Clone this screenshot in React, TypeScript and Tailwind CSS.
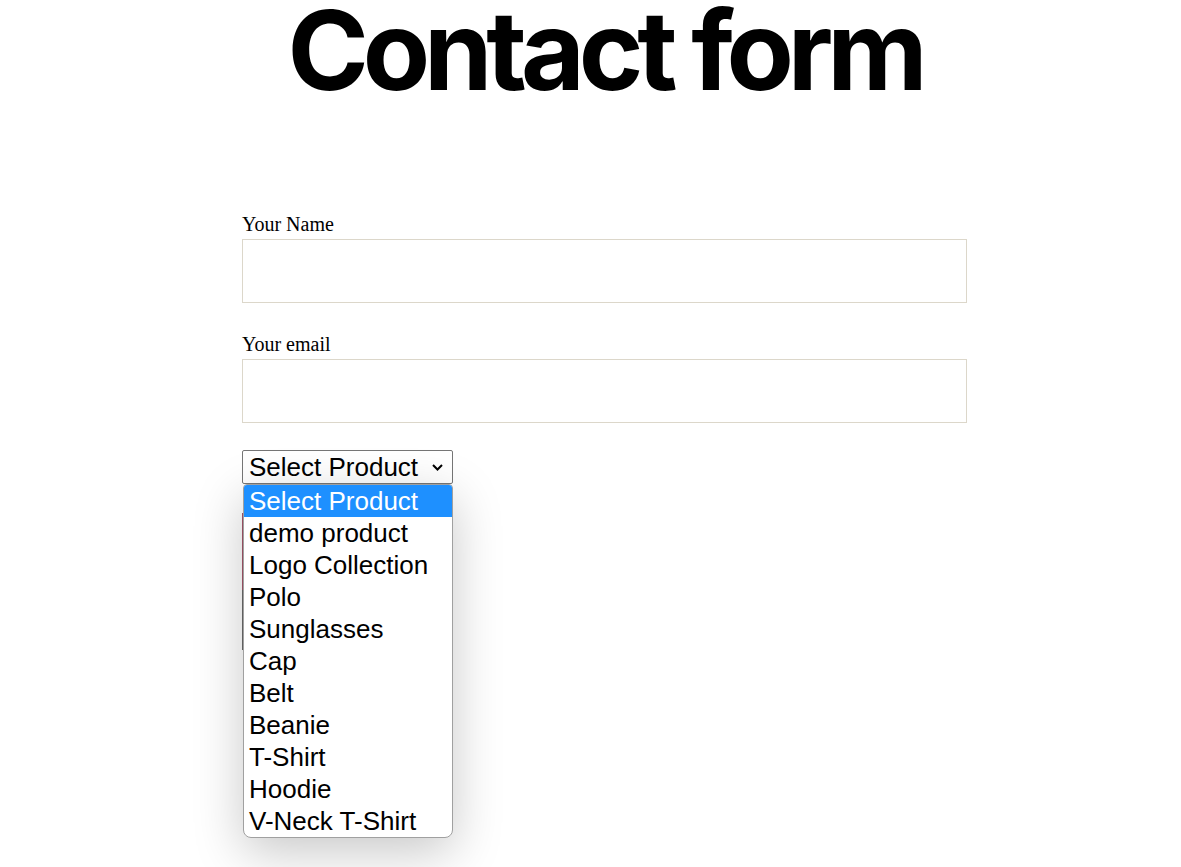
import React from "react";

const products = [
  "Select Product",
  "demo product",
  "Logo Collection",
  "Polo",
  "Sunglasses",
  "Cap",
  "Belt",
  "Beanie",
  "T-Shirt",
  "Hoodie",
  "V-Neck T-Shirt",
];

export default function App() {
  return (
    <div className="min-h-[867px] bg-white pl-[28px] text-black">
      <h1 className="text-center font-['Inter',sans-serif] text-[110px] font-bold leading-[100px] tracking-[-0.056em]">
        Contact form
      </h1>

      <form className="relative mx-auto mt-[114px] w-[725px] font-['Liberation_Serif',serif]">
        <label className="block h-6 text-[20px] leading-5">Your Name</label>
        <div className="mt-px h-16 w-full border border-[#dcd7ca]" />

        <label className="mt-[31px] block h-6 text-[20px] leading-5">Your email</label>
        <div className="mt-px h-16 w-full border border-[#dcd7ca]" />

        <div className="relative mt-[27px]">
          <div className="flex h-[34px] w-[211px] items-center justify-between rounded-[2px] border border-[#767676] pl-[6px] pr-[9px] font-['Liberation_Sans',Arial,sans-serif] text-[26px] leading-none">
            <span>Select Product</span>
            <svg width="11" height="7" viewBox="0 0 11 7" fill="none">
              <path d="M1 1l4.5 4.5L10 1" stroke="#000" strokeWidth="2" />
            </svg>
          </div>

          {/* fields under the open list */}
          <div className="mt-[29px] h-[77px] w-[200px] border-l-2 border-[#a4566a]" />
          <div className="h-[60px] w-[200px] border-l-2 border-[#6b6b6b]" />

          <ul className="absolute left-px top-[34px] w-[210px] overflow-hidden rounded-t-[4px] rounded-b-[8px] border border-[#a0a0a0] bg-white font-['Liberation_Sans',Arial,sans-serif] text-[26px] leading-[32px] shadow-[0_14px_50px_rgba(0,0,0,0.22)]">
            {products.map((p, i) => (
              <li
                key={p}
                className={`px-[5px] whitespace-nowrap ${i === 0 ? "bg-[#1e90ff] text-white" : "text-black"}`}
              >
                {p}
              </li>
            ))}
          </ul>
        </div>
      </form>
    </div>
  );
}
